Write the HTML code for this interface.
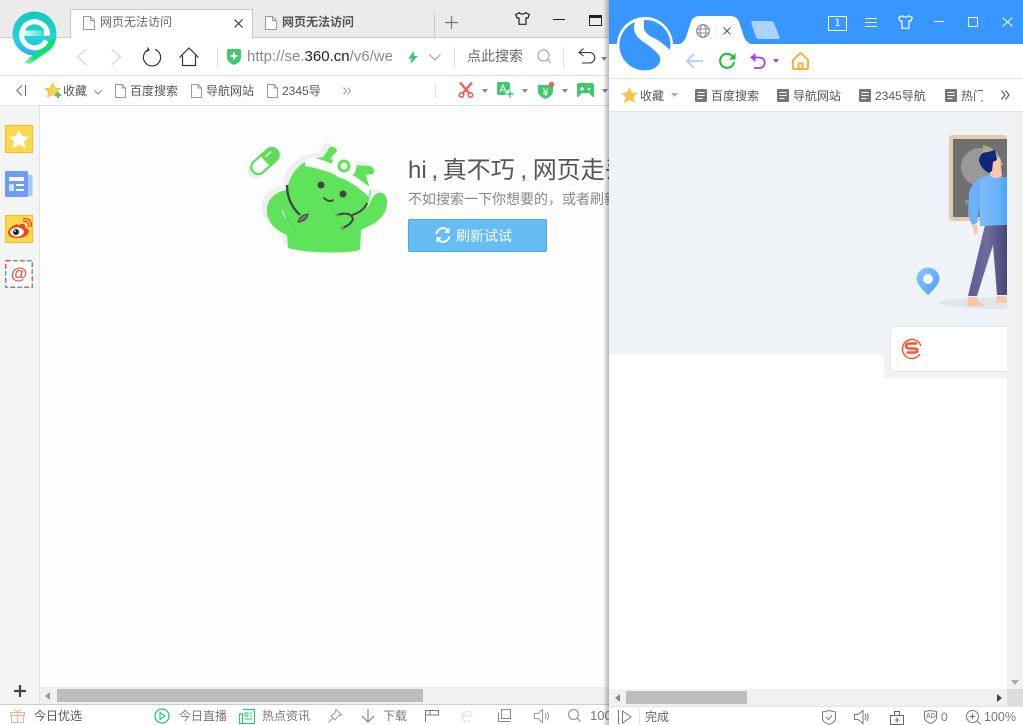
<!DOCTYPE html>
<html><head><meta charset="utf-8">
<style>
html,body{margin:0;padding:0;width:1023px;height:725px;overflow:hidden;background:#fff}
body{position:relative;font-family:"Liberation Sans","Noto Sans CJK SC",sans-serif;font-size:12px;color:#555}
.a{position:absolute}
.t{position:absolute;white-space:nowrap;line-height:16px}
svg{position:absolute;overflow:visible}
</style></head><body>

<!-- LEFT WINDOW -->
<div class="a" style="left:0;top:0;width:620px;height:37px;background:#ebebeb"></div>
<div class="a" style="left:0;top:37px;width:620px;height:1px;background:#c9c9c9"></div>
<div class="a" style="left:70px;top:9px;height:29px;background:#fff;border:1px solid #c9c9c9;border-bottom:0;box-sizing:border-box;width:183px"></div>
<svg style="left:83px;top:16px" width="12" height="14"><path d="M.5.5H7.500L11.500 4.500V13.500H.5Z M7.500.5V4.500H11.500" fill="#fff" stroke="#999"/></svg>
<div class="t" style="left:100px;top:14px;color:#666">网页无法访问</div>
<svg style="left:234px;top:19px" width="9" height="9"><path d="M.5.5L8.500 8.500M8.500.5L.5 8.500" stroke="#333" stroke-width="1.100"/></svg>
<svg style="left:265px;top:16px" width="12" height="14"><path d="M.5.5H7.500L11.500 4.500V13.500H.5Z M7.500.5V4.500H11.500" fill="#fff" stroke="#999"/></svg>
<div class="t" style="left:282px;top:14px;color:#555;font-weight:bold">网页无法访问</div>
<div class="a" style="left:434px;top:13px;width:1px;height:24px;background:#c9c9c9"></div>
<svg style="left:445px;top:16px" width="13" height="13"><path d="M6.500 0V13M0 6.500H13" stroke="#777" stroke-width="1.200"/></svg>
<svg style="left:515px;top:12px" width="15" height="13"><path d="M4.500.7L.7 2.500 2 6H4V12.300H11V6H13L14.300 2.500 10.500.7C10 2.500 5 2.500 4.500.7Z" fill="none" stroke="#222" stroke-width="1.200"/></svg>
<div class="a" style="left:553px;top:19px;width:12px;height:1px;background:#222"></div>
<div class="a" style="left:589px;top:15px;width:11px;height:7px;border:1px solid #222;border-top-width:3px"></div>

<!-- left toolbar -->
<svg style="left:76px;top:48px" width="12" height="18"><path d="M10.500 1L1.500 9 10.500 17" fill="none" stroke="#d5d5d5" stroke-width="1.200"/></svg>
<svg style="left:110px;top:48px" width="12" height="18"><path d="M1.500 1L10.500 9 1.500 17" fill="none" stroke="#d5d5d5" stroke-width="1.200"/></svg>
<svg style="left:142px;top:47px" width="20" height="20"><path d="M6.500 2.500A8.600 8.600 0 1 0 13 2.300M5.500 .5L7 3 4.500 4.500" fill="none" stroke="#333" stroke-width="1.200"/></svg>
<svg style="left:179px;top:47px" width="20" height="20"><path d="M.5 10.500L10 1 19.500 10.500M3.500 8.500V18.500H16.500V8.500" fill="none" stroke="#333" stroke-width="1.200"/></svg>
<div class="a" style="left:217px;top:47px;width:1px;height:20px;background:#ddd"></div>
<svg style="left:227px;top:49px" width="14" height="16"><path d="M0 1.500Q0 0 1.500 0H12.500Q14 0 14 1.500V9Q14 13 7 16 0 13 0 9Z" fill="#3fc772"/><path d="M7 3.500V10.500M3.500 7H10.500" stroke="#fff" stroke-width="2"/></svg>
<div class="t" style="left:247px;top:48px;width:145px;overflow:hidden;font-size:15px;line-height:18px;color:#8a8a8a">http://se.<span style="color:#222">360.cn</span>/v6/we</div>
<svg style="left:408px;top:51px" width="10" height="13"><path d="M6 0L0 7.500H3.500L2.500 13 10 5H6Z" fill="#3fc772"/></svg>
<svg style="left:429px;top:54px" width="12" height="7"><path d="M.5.5L6 6 11.500.5" fill="none" stroke="#999"/></svg>
<div class="a" style="left:454px;top:47px;width:1px;height:20px;background:#ddd"></div>
<div class="t" style="left:467px;top:48px;font-size:14px;line-height:17px;color:#666">点此搜索</div>
<svg style="left:537px;top:49px" width="15" height="15"><circle cx="6.500" cy="6.500" r="5.500" fill="none" stroke="#aaa" stroke-width="1.200"/><path d="M10.500 10.500L14 14" stroke="#aaa" stroke-width="1.200"/></svg>
<div class="a" style="left:563px;top:47px;width:1px;height:20px;background:#ddd"></div>
<svg style="left:578px;top:48px" width="18" height="16"><path d="M1 4.500H11.500A5 5 0 0 1 11.500 15H4M5.500.5L1 4.500 5.500 8" fill="none" stroke="#333" stroke-width="1.100"/></svg>
<svg style="left:601px;top:57px" width="6" height="4"><path d="M0 0H6L3 4Z" fill="#888"/></svg>
<div class="a" style="left:0;top:75px;width:620px;height:1px;background:#dcdcdc"></div>

<!-- e logo -->
<svg style="left:11px;top:11px" width="48" height="55" viewBox="0 0 48 55">
<defs><linearGradient id="e1" x1="0" y1="0" x2="0" y2="1"><stop offset="0" stop-color="#15c8b8"/><stop offset=".6" stop-color="#1fd6d8"/><stop offset="1" stop-color="#2aaef5"/></linearGradient>
<linearGradient id="e2" x1="0" y1="0" x2="1" y2="0"><stop offset="0" stop-color="#fff"/><stop offset=".8" stop-color="#fff" stop-opacity=".15"/><stop offset="1" stop-color="#fff" stop-opacity="0"/></linearGradient>
<linearGradient id="e3" x1="1" y1="0" x2="0" y2="1"><stop offset="0" stop-color="#06e070"/><stop offset=".7" stop-color="#12e07c"/><stop offset="1" stop-color="#a8f3c0"/></linearGradient></defs>
<circle cx="23.500" cy="22.500" r="22" fill="url(#e1)"/>
<path d="M45 27Q44 36 36 41L19 53 13 52 27 39 37 30Z" fill="url(#e3)"/>
<path d="M35.300 29.500A13 13 0 1 1 36.500 22" fill="none" stroke="#fff" stroke-width="5"/>
<path d="M10 19.500H39V25H10Z" fill="url(#e2)"/>
<path d="M33 19.500H39V25H33Z" fill="#fff"/>
</svg>

<!-- left bookmarks -->
<svg style="left:16px;top:85px" width="11" height="11"><path d="M6 .5L.8 5.500 6 10.500" fill="none" stroke="#666"/><path d="M9.500 0V11" stroke="#666"/></svg>
<svg style="left:45px;top:83px" width="17" height="16" viewBox="0 0 17 16"><path d="M7.500 0L10 5 15 5.500 11.500 9 12.500 14 7.500 11.500 2.500 14 3.500 9 0 5.500 5 5Z" fill="#f8d44c" stroke="#e3ad2c" stroke-width=".6"/><path d="M13 9V15M10 12H16" stroke="#3fc772" stroke-width="2"/></svg>
<div class="t" style="left:63px;top:83px;color:#555">收藏</div>
<svg style="left:94px;top:90px" width="8" height="5"><path d="M.5.5L4 4 7.500.5" fill="none" stroke="#888"/></svg>
<svg style="left:115px;top:84px" width="11" height="14"><path d="M.5.5H7L10.500 4V13.500H.5ZM7 .5V4H10.500" fill="#fff" stroke="#999"/></svg>
<div class="t" style="left:130px;top:83px">百度搜索</div>
<svg style="left:191px;top:84px" width="11" height="14"><path d="M.5.5H7L10.500 4V13.500H.5ZM7 .5V4H10.500" fill="#fff" stroke="#999"/></svg>
<div class="t" style="left:206px;top:83px">导航网站</div>
<svg style="left:267px;top:84px" width="11" height="14"><path d="M.5.5H7L10.500 4V13.500H.5ZM7 .5V4H10.500" fill="#fff" stroke="#999"/></svg>
<div class="t" style="left:282px;top:83px">2345导</div>
<svg style="left:343px;top:87px" width="8" height="8"><path d="M.5.5L3.500 4 .5 7.500M4.500.5L7.500 4 4.500 7.500" fill="none" stroke="#999"/></svg>
<div class="a" style="left:435px;top:83px;width:1px;height:15px;background:#ddd"></div>
<svg style="left:458px;top:82px" width="16" height="16"><path d="M2 0.500L11 11M14 0.500L5 11" stroke="#ef5d5d" stroke-width="2.400" fill="none"/><circle cx="3.500" cy="13" r="2.200" fill="none" stroke="#ef5d5d" stroke-width="1.600"/><circle cx="12.500" cy="13" r="2.200" fill="none" stroke="#ef5d5d" stroke-width="1.600"/></svg>
<svg style="left:482px;top:89px" width="6" height="4"><path d="M0 0H6L3 4Z" fill="#888"/></svg>
<svg style="left:497px;top:82px" width="18" height="17"><rect width="13" height="13" y="0" rx="2" fill="#3fc772"/><path d="M3 10L6 3 9 10M4 8H8" stroke="#fff" fill="none"/><circle cx="13" cy="12" r="4.500" fill="#fff"/><path d="M13 8.500V15.500M9.500 12H16.500" stroke="#3fc772" stroke-width="1.500"/></svg>
<svg style="left:522px;top:89px" width="6" height="4"><path d="M0 0H6L3 4Z" fill="#888"/></svg>
<svg style="left:538px;top:81px" width="17" height="18"><path d="M0 4H15V10Q15 15 7.500 18 0 15 0 10Z" fill="#3fc772"/><path d="M5 7L7.500 10 10 7M7.500 10V15M5 11H10M5 13H10" stroke="#fff" fill="none"/><circle cx="13.500" cy="3.500" r="2.800" fill="#f25f5c"/></svg>
<svg style="left:562px;top:89px" width="6" height="4"><path d="M0 0H6L3 4Z" fill="#888"/></svg>
<svg style="left:577px;top:83px" width="17" height="14"><path d="M2 0H15Q17 0 17 2V13Q17 14 15.500 14L12 10H5L1.500 14Q0 14 0 13V2Q0 0 2 0Z" fill="#3fc772"/><path d="M3 6H7M5 4V8" stroke="#fff" stroke-width="1.300"/><circle cx="12" cy="6" r="1.300" fill="#fff"/></svg>
<svg style="left:602px;top:89px" width="6" height="4"><path d="M0 0H6L3 4Z" fill="#888"/></svg>
<div class="a" style="left:0;top:105px;width:620px;height:1px;background:#e2e2e2"></div>

<!-- sidebar -->
<div class="a" style="left:0;top:106px;width:39px;height:598px;background:#f3f5f4"></div>
<div class="a" style="left:39px;top:106px;width:1px;height:598px;background:#e4e6e5"></div>
<div class="a" style="left:5px;top:125px;width:28px;height:28px;box-sizing:border-box;background:#fcd94a;border:1px solid #f5bd25"></div>
<svg style="left:9px;top:130px" width="20" height="18"><path d="M10 0L13 6 20 7 15 11.500 16.500 18 10 14.800 3.500 18 5 11.500 0 7 7 6Z" fill="#fff"/></svg>
<svg style="left:5px;top:171px" width="28" height="26"><rect x="20" y="4" width="7.500" height="21" rx="1" fill="#a9c6fb"/><rect width="23" height="26" rx="1.500" fill="#6c9cf8"/><rect x="4" y="6" width="15" height="4" fill="#fff"/><rect x="4" y="13" width="5" height="7" fill="#d2e1fd"/><rect x="11" y="13" width="8" height="2" fill="#fff"/><rect x="11" y="18" width="8" height="2" fill="#fff"/></svg>
<div class="a" style="left:5px;top:215px;width:28px;height:28px;box-sizing:border-box;background:#fcd94a;border:1px solid #f5bd25"></div>
<svg style="left:7px;top:218px" width="24" height="22"><path d="M10 6Q2 9 1 14 1 20 10 20 21 20 22 13 21 10 18 10 19 5 14 6L11 7Z" fill="#e8472e"/><ellipse cx="10" cy="14" rx="6.800" ry="4.600" fill="#fff"/><circle cx="9" cy="14" r="3" fill="#222"/><circle cx="8" cy="13" r=".9" fill="#fff"/><path d="M16 3Q22 3 22 9M16 .5Q25 0 24.500 9" fill="none" stroke="#e8472e" stroke-width="1.300"/></svg>
<svg style="left:5px;top:260px" width="28" height="28"><rect x=".75" y=".75" width="26.500" height="26.500" fill="#fff"/><rect x=".75" y=".75" width="26.500" height="26.500" fill="none" stroke="#e8574a" stroke-width="1.500" stroke-dasharray="5 9"/><rect x=".75" y=".75" width="26.500" height="26.500" fill="none" stroke="#45a6f0" stroke-width="1.500" stroke-dasharray="5 9" stroke-dashoffset="-7"/></svg>
<div class="t" style="left:10px;top:265px;width:18px;text-align:center;font-size:17px;font-weight:bold;color:#e8574a;line-height:18px">@</div>
<svg style="left:13px;top:684px" width="14" height="14"><path d="M7 1V13M1 7H13" stroke="#444" stroke-width="2.200"/></svg>

<!-- left content -->
<div class="a" style="left:40px;top:106px;width:570px;height:581px;background:#fdfdfd"></div>
<!-- mascot -->
<svg style="left:245px;top:135px" width="150" height="120" viewBox="0 0 150 120">
<defs><path id="bd" d="M43 50C47 36 56 28 66 24L78 22 85 12A5 5 0 0 1 92 16L85 24 110 30 124 31A5 5 0 0 1 128 39L121 40 122 44 126 57 122 73C126 68 128 58 134 58 140 57 142 62 142 67 142 76 138 82 130 88L116 95 115 115C100 119 60 118 43 113L42 100C32 96 22 88 22 76 21 68 28 56 43 55Z"/></defs>
<use href="#bd" fill="#efefef" transform="translate(-5 -4)"/>
<g transform="rotate(-42 20 26)"><rect x="1" y="17" width="38" height="16" rx="8" fill="#ececec" transform="translate(-2 2)"/><rect x="4" y="19" width="32" height="14" rx="7" fill="#fff" stroke="#5fdb55" stroke-width="2.200"/><path d="M20 19H29Q36 19 36 26 36 33 29 33H20Z" fill="#5fdb55"/><path d="M23 23H31" stroke="#fff" stroke-width="1.500"/></g>
<use href="#bd" fill="#5fe35b"/>
<path d="M38 72Q36 80 42 84L40 78Z" fill="#fff"/>
<path d="M38 70Q38 80 46 88 51 94 50 98" fill="none" stroke="#52d24f" stroke-width="1"/>
<path d="M60 27L66 22C80 25 90 30 105 38L125 52 124 62C112 50 90 36 60 31Z" fill="#fff"/>
<circle cx="99" cy="31" r="12.500" fill="#fff"/>
<circle cx="99" cy="31" r="5" fill="none" stroke="#5fe35b" stroke-width="3"/>
<circle cx="76" cy="50" r="3.500" fill="#444"/><circle cx="98" cy="59" r="3.500" fill="#444"/>
<path d="M79 63Q84 68 88 65" fill="none" stroke="#444" stroke-width="1.800" stroke-linecap="round"/>
<path d="M42 50Q42 68 55 80" fill="none" stroke="#444" stroke-width="2.300"/>
<path d="M53 87Q55 80 63 79 62 86 53 87Z" fill="#777" stroke="#444"/>
<path d="M122 68Q118 77 107 80" fill="none" stroke="#444" stroke-width="2"/>
<path d="M92 80Q106 76 108 84 106 90 97 93" fill="none" stroke="#444" stroke-width="2"/>
<circle cx="92" cy="80" r="1.800" fill="#888"/><circle cx="97" cy="93" r="1.800" fill="#888"/>
</svg>
<div class="t" style="left:408px;top:156px;font-size:24px;line-height:30px;color:#555;width:202px;overflow:hidden">hi<span style="display:inline-block;width:16px;text-align:center">,</span>真不巧<span style="display:inline-block;width:18px;text-align:center">,</span>网页走丢了</div>
<div class="t" style="left:408px;top:191px;font-size:14px;line-height:17px;color:#888;width:202px;overflow:hidden">不如搜索一下你想要的，或者刷新试试</div>
<div class="a" style="left:408px;top:219px;width:139px;height:33px;box-sizing:border-box;background:#66bdf3;border:1px solid #4ea8e2;border-radius:2px"></div>
<svg style="left:435px;top:227px" width="16" height="16"><path d="M1.500 7A6.500 6.500 0 0 1 13 3.500M14.500 9A6.500 6.500 0 0 1 3 12.500" fill="none" stroke="#fff" stroke-width="2"/><path d="M14.500 .5V6H9ZM1.500 15.500V10H7Z" fill="#fff"/></svg>
<div class="t" style="left:456px;top:228px;font-size:14px;color:#fff;line-height:17px">刷新试试</div>

<!-- left scrollbar -->
<div class="a" style="left:40px;top:687px;width:570px;height:17px;background:#f0f0f0"></div>
<svg style="left:45px;top:692px" width="5" height="8"><path d="M5 0V8L0 4Z" fill="#999"/></svg>
<div class="a" style="left:57px;top:689px;width:366px;height:13px;background:#bdbdbd"></div>

<!-- left status -->
<div class="a" style="left:0;top:704px;width:610px;height:1px;background:#ccc"></div>
<svg style="left:10px;top:708px" width="15" height="15"><path d="M.5 4.500H14.500V7.500H.5ZM1.500 7.500V14.500H13.500V7.500M7.500 4.500V14.500M7.500 4.500L4 1M7.500 4.500L11 1" fill="none" stroke="#f4b18d"/></svg>
<div class="t" style="left:34px;top:708px;color:#555">今日优选</div>
<svg style="left:154px;top:708px" width="16" height="16"><circle cx="8" cy="8" r="7" fill="none" stroke="#2dc76d" stroke-width="1.300"/><path d="M6 4.500L11 8 6 11.500Z" fill="none" stroke="#2dc76d" stroke-width="1.200"/></svg>
<div class="t" style="left:179px;top:708px;color:#777">今日直播</div>
<svg style="left:239px;top:709px" width="16" height="15"><path d="M3.500.5H15.500V14.500H.5V5H3.500V14.500" fill="none" stroke="#2dc76d" stroke-width="1.200"/><path d="M6 4H9V7H6ZM11 4H13M11 7H13M6 10H13" fill="none" stroke="#2dc76d"/></svg>
<div class="t" style="left:262px;top:708px;color:#777">热点资讯</div>
<svg style="left:328px;top:709px" width="14" height="14"><path d="M8 0.500L13.500 6 10 7 7 11 3 7 7 4ZM5 9L.5 13.500" fill="none" stroke="#999"/></svg>
<svg style="left:361px;top:709px" width="14" height="14"><path d="M7 0V13M1 7L7 13 13 7" fill="none" stroke="#777"/></svg>
<div class="t" style="left:383px;top:708px;color:#777">下载</div>
<svg style="left:425px;top:710px" width="14" height="12"><path d="M.5 12V.5H13.500V5H5V.5M5 5H.5" fill="none" stroke="#777"/></svg>
<svg style="left:460px;top:709px" width="14" height="14"><path d="M2 7H12A5 5 0 1 0 10.500 11M1 12.500Q0 10 6 4" fill="none" stroke="#e2e2e2"/></svg>
<svg style="left:498px;top:709px" width="13" height="13"><path d="M3.500 .5H12.500V9.500H3.500ZM.5 3.500V12.500H12.500" fill="none" stroke="#888"/></svg>
<svg style="left:534px;top:709px" width="16" height="14"><path d="M.5 4.500H4L8.500 .5V13.500L4 9.500H.5ZM11 4Q13 7 11 10M13 2.500Q16 7 13 11.500" fill="none" stroke="#999"/></svg>
<svg style="left:568px;top:709px" width="13" height="13"><circle cx="5.500" cy="5.500" r="5" fill="none" stroke="#888"/><path d="M9 9L12.500 12.500" stroke="#888"/></svg>
<div class="t" style="left:590px;top:708px;color:#777;font-size:13px">100</div>

<!-- RIGHT WINDOW -->
<div class="a" style="left:603px;top:0;width:6px;height:725px;background:linear-gradient(to right,rgba(0,0,0,0),rgba(0,0,0,.28))"></div>
<div class="a" style="left:609px;top:0;width:414px;height:725px;background:#fff"></div>
<div class="a" style="left:609px;top:0;width:414px;height:44px;background:#3797ff"></div>
<!-- tab -->
<svg style="left:680px;top:16px" width="72" height="28"><path d="M0 28Q5 26 7 18L11 6Q13 0 20 0H50Q57 0 59 6L63 18Q65 26 71 28Z" fill="#fff"/></svg>
<svg style="left:696px;top:24px" width="14" height="14"><circle cx="7" cy="7" r="6.300" fill="none" stroke="#888" stroke-width="1.200"/><ellipse cx="7" cy="7" rx="3" ry="6.300" fill="none" stroke="#888"/><path d="M.7 5H13.300M.7 9H13.300" stroke="#888"/></svg>
<div class="a" style="left:715px;top:25px;width:1px;height:12px;background:#eee"></div>
<svg style="left:723px;top:27px" width="8" height="8"><path d="M.5.5L7.500 7.500M7.500.5L.5 7.500" stroke="#555"/></svg>
<svg style="left:751px;top:21px" width="29" height="18"><path d="M1 0H20Q22 0 23 2L28.500 16Q29 18 27 18H8Q6 18 5 16L.5 3Q0 0 1 0Z" fill="#acd3ff"/></svg>
<!-- right window controls -->
<div class="a" style="left:828px;top:16px;width:17px;height:13px;border:1px solid #fff;border-radius:1px;color:#fff;font-size:11px;line-height:13px;text-align:center">1</div>
<div class="a" style="left:865px;top:18px;width:12px;height:1px;background:#fff;box-shadow:0 4px 0 #fff,0 8px 0 #fff"></div>
<svg style="left:898px;top:15px" width="15" height="14"><path d="M4.500.7L.7 2.500 2 6H4V13.300H11V6H13L14.300 2.500 10.500.7C10 2.500 5 2.500 4.500.7Z" fill="none" stroke="#fff" stroke-width="1.200"/></svg>
<div class="a" style="left:934px;top:21px;width:10px;height:1px;background:#fff"></div>
<div class="a" style="left:968px;top:17px;width:8px;height:8px;border:1px solid #fff;border-radius:1px"></div>
<svg style="left:1002px;top:17px" width="11" height="10"><path d="M.5.5L10.500 9.500M10.500.5L.5 9.500" stroke="#fff"/></svg>
<!-- sogou logo -->
<svg style="left:617px;top:17px" width="56" height="56" viewBox="0 0 56 56">
<circle cx="28" cy="28" r="28" fill="#fff"/>
<path d="M18 5A25 25 0 0 0 37 51.500Q46 46 42 38 35 30 25 24 14 16 18 5Z" fill="#3797ff"/>
<path d="M27 9Q26 14 33 19 44 24 53 33A25 25 0 0 0 27 3Z" fill="#3797ff"/>
</svg>
<!-- right toolbar -->
<svg style="left:686px;top:53px" width="18" height="16"><path d="M8 1L1 8 8 15M1 8H17" fill="none" stroke="#a9d1ff" stroke-width="1.800"/></svg>
<svg style="left:718px;top:52px" width="18" height="18"><path d="M15.500 6A7 7 0 1 0 16 10" fill="none" stroke="#12bf2c" stroke-width="2"/><path d="M17.500 1V7.500H11Z" fill="#12bf2c"/></svg>
<svg style="left:750px;top:53px" width="16" height="16"><path d="M3 4.500H9.500A5 5 0 0 1 9.500 15H4" fill="none" stroke="#a33fe8" stroke-width="1.800"/><path d="M5.500 0V9L0 4.500Z" fill="#a33fe8"/></svg>
<svg style="left:773px;top:59px" width="6" height="4"><path d="M0 0H6L3 4Z" fill="#a33fe8"/></svg>
<svg style="left:792px;top:52px" width="17" height="18"><path d="M1 8L8.500 1 16 8V16.500Q16 17 15 17H2Q1 17 1 16.500ZM6.500 17V11.500H10.500V17" fill="none" stroke="#ffa81e" stroke-width="1.800"/></svg>
<div class="a" style="left:609px;top:78px;width:414px;height:1px;background:#e3e3e3"></div>
<!-- right bookmarks -->
<svg style="left:621px;top:87px" width="17" height="16"><path d="M8.500 0L11 5.500 17 6 12.500 10 14 16 8.500 13 3 16 4.500 10 0 6 6 5.500Z" fill="#f9c545"/></svg>
<div class="t" style="left:640px;top:88px;color:#555">收藏</div>
<svg style="left:671px;top:93px" width="7" height="4"><path d="M0 0H7L3.500 4Z" fill="#aaa"/></svg>
<svg style="left:695px;top:89px" width="12" height="13"><rect width="12" height="13" rx="1" fill="#777"/><path d="M2.500 3.500H9.500M2.500 6.500H9.500M2.500 9.500H7.500" stroke="#fff"/></svg>
<div class="t" style="left:711px;top:88px">百度搜索</div>
<svg style="left:777px;top:89px" width="12" height="13"><rect width="12" height="13" rx="1" fill="#777"/><path d="M2.500 3.500H9.500M2.500 6.500H9.500M2.500 9.500H7.500" stroke="#fff"/></svg>
<div class="t" style="left:793px;top:88px">导航网站</div>
<svg style="left:859px;top:89px" width="12" height="13"><rect width="12" height="13" rx="1" fill="#777"/><path d="M2.500 3.500H9.500M2.500 6.500H9.500M2.500 9.500H7.500" stroke="#fff"/></svg>
<div class="t" style="left:875px;top:88px">2345导航</div>
<svg style="left:945px;top:89px" width="12" height="13"><rect width="12" height="13" rx="1" fill="#777"/><path d="M2.500 3.500H9.500M2.500 6.500H9.500M2.500 9.500H7.500" stroke="#fff"/></svg>
<div class="t" style="left:961px;top:88px;width:22px;overflow:hidden">热门</div>
<svg style="left:1001px;top:90px" width="9" height="10"><path d="M.5.5L4 5 .5 9.500M4.500.5L8 5 4.500 9.500" fill="none" stroke="#555" stroke-width="1.100"/></svg>
<div class="a" style="left:609px;top:111px;width:414px;height:1px;background:#e3e3e3"></div>

<!-- right content -->
<div class="a" style="left:609px;top:112px;width:398px;height:266px;background:#eff3f8"></div>
<div class="a" style="left:609px;top:354px;width:275px;height:30px;background:#fff;border-top-right-radius:6px"></div>
<div class="a" style="left:609px;top:378px;width:398px;height:311px;background:#fff"></div>
<div class="a" style="left:884px;top:372px;width:123px;height:6px;background:#eff3f8;border-bottom-left-radius:6px"></div>
<div class="a" style="left:890px;top:326px;width:117px;height:46px;box-sizing:border-box;background:#fff;border:1px solid #e3e6ea;border-right:0;border-radius:5px 0 0 5px"></div>
<svg style="left:901px;top:337px" width="22" height="22" viewBox="0 0 22 22"><path d="M19 17A9.500 9.500 0 1 1 20 9" fill="none" stroke="#f5562a" stroke-width="1.500"/><path d="M16 6.500H9Q5 6.500 5 9 5 11.500 9 11.500H13Q16.500 11.500 16.500 13.500 16.500 15.500 13 15.500H5.500" fill="none" stroke="#f5562a" stroke-width="2.400"/></svg>
<!-- illustration -->
<div class="a" style="left:900px;top:130px;width:107px;height:190px;overflow:hidden">
<svg style="left:0;top:0" width="107" height="190" viewBox="0 0 107 190">
<defs>
<linearGradient id="sh" x1="0" x2="1"><stop offset="0" stop-color="#7dbcfd"/><stop offset=".7" stop-color="#6ab0fb"/><stop offset="1" stop-color="#4aa0f8"/></linearGradient>
<linearGradient id="pt" x1="0" x2="1"><stop offset="0" stop-color="#5d5b8f"/><stop offset=".5" stop-color="#6e6c9c"/><stop offset="1" stop-color="#46477a"/></linearGradient>
<linearGradient id="pin" x1="0" y1="0" x2="1" y2="1"><stop offset="0" stop-color="#8cc7ff"/><stop offset="1" stop-color="#4a9ffa"/></linearGradient>
</defs>
<rect x="49" y="5" width="58" height="86" rx="3" fill="#e0ccae"/>
<rect x="53" y="9" width="54" height="78" fill="#707070"/>
<circle cx="80" cy="37" r="19" fill="#999"/>
<path d="M83 15Q98 18 103 35L83 37Z" fill="#a9ae84"/>
<rect x="65" y="70" width="30" height="4" fill="#8f8f8f"/>
<ellipse cx="106" cy="173" rx="67" ry="6" fill="#e1e6ea"/>
<path d="M68 167H77L78 171 84 175V176H67Z" fill="#f7c7ae"/>
<path d="M97 166H105L107 168V173H96Z" fill="#f7c7ae"/>
<path d="M85 95H107V165H97L93 115 77 166H68Z" fill="url(#pt)"/>
<path d="M80 48Q85 46 91 45L98 47 107 47V95L80 96Q79 80 80 48Z" fill="url(#sh)"/>
<path d="M80 48Q71 54 69 64L68 85 72 95 77 93 80 70Z" fill="#6cb1fb"/>
<path d="M72 95L77 94 78 102 75 105Z" fill="#f7c7ae"/>
<path d="M90 28H100L102 46Q97 50 90 46Z" fill="#f7c7ae"/>
<path d="M95 20L97 30 93 32 92 41 89 43Q80 38 79 30 80 22 88 22Z" fill="#0d2878"/>
<path d="M28 165Q17 155 16.500 149A11.500 11.500 0 0 1 39.500 149Q39 155 28 165Z" fill="url(#pin)"/>
<circle cx="28" cy="149" r="5" fill="#fff" opacity=".95"/>
</svg></div>

<!-- right scrollbars -->
<div class="a" style="left:1007px;top:112px;width:16px;height:577px;background:#f1f1f1"></div>
<svg style="left:1011px;top:680px" width="8" height="5"><path d="M0 0H8L4 5Z" fill="#aaa"/></svg>
<div class="a" style="left:609px;top:689px;width:398px;height:17px;background:#f1f1f1"></div>
<div class="a" style="left:1007px;top:689px;width:16px;height:17px;background:#dcdcdc"></div>
<svg style="left:615px;top:694px" width="5" height="8"><path d="M5 0V8L0 4Z" fill="#888"/></svg>
<svg style="left:997px;top:694px" width="5" height="8"><path d="M0 0V8L5 4Z" fill="#444"/></svg>
<div class="a" style="left:626px;top:691px;width:121px;height:13px;background:#bdbdbd"></div>
<div class="a" style="left:609px;top:706px;width:414px;height:1px;background:#e5e5e5"></div>
<!-- right status -->
<svg style="left:618px;top:710px" width="14" height="14"><path d="M.5 0V14M4.500 1L13 7 4.500 13Z" fill="none" stroke="#777"/></svg>
<div class="a" style="left:639px;top:708px;width:1px;height:17px;background:#e5e5e5"></div>
<div class="t" style="left:645px;top:709px;color:#666">完成</div>
<svg style="left:822px;top:710px" width="14" height="15"><path d="M.5 2L7 .5 13.500 2V8.500Q13.500 12 7 14.500 .5 12 .5 8.500ZM4 7L6.500 9.500 10 5.500" fill="none" stroke="#777"/></svg>
<svg style="left:854px;top:710px" width="16" height="14"><path d="M.5 4.500H4L9 .5V13.500L4 9.500H.5ZM11 4Q13 7 11 10M13 3Q15.500 7 13 11" fill="none" stroke="#777"/></svg>
<svg style="left:890px;top:711px" width="14" height="14"><path d="M.5 4.500H13.500V13.500H.5ZM4.500 4.500V.5H9.500V4.500M7 6.500V11.500M4.500 9H9.500" fill="none" stroke="#666"/></svg>
<svg style="left:924px;top:710px" width="13" height="14"><path d="M.5 1.500L6.500.5 12.500 1.500V8Q12.500 11 6.500 13.500 .5 11 .5 8Z" fill="none" stroke="#777"/></svg>
<div class="t" style="left:926px;top:710px;font-size:7px;color:#666;line-height:13px">AD</div>
<div class="t" style="left:941px;top:709px;color:#777">0</div>
<svg style="left:966px;top:710px" width="15" height="15"><circle cx="6.500" cy="6.500" r="6" fill="none" stroke="#777"/><path d="M6.500 3.500V9.500M3.500 6.500H9.500M11 11L14.500 14.500" stroke="#777" fill="none"/></svg>
<div class="t" style="left:984px;top:709px;color:#777;font-size:12.500px">100%</div>
</body></html>
